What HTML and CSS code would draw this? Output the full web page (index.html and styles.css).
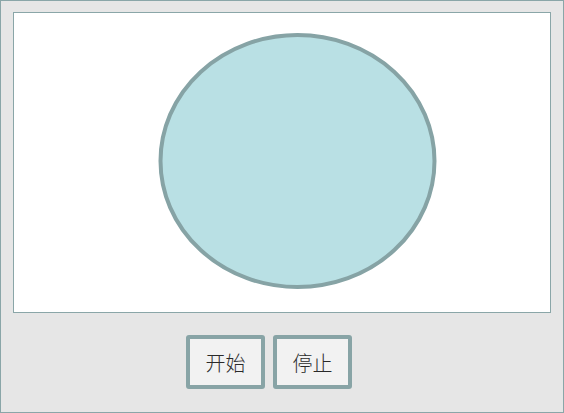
FILE: index.html
```html
<!DOCTYPE html>
<html>
<head>
<meta charset="utf-8">
<link rel="stylesheet" href="styles.css">
</head>
<body>
<div class="window">
  <div class="canvas">
    <svg width="536" height="299" viewBox="0 0 536 299">
      <ellipse cx="283.5" cy="148" rx="137" ry="126" fill="#b9e0e4" stroke="#86a3a5" stroke-width="4"/>
    </svg>
  </div>
  <div class="controls">
    <button class="btn">开始</button>
    <button class="btn">停止</button>
  </div>
</div>
</body>
</html>
```
FILE: styles.css
```css
html, body {
  margin: 0;
  padding: 0;
}
.window {
  width: 564px;
  height: 413px;
  box-sizing: border-box;
  border: 1px solid #8aa6a8;
  background: #e6e6e6;
  padding: 11px 0 0 12px;
  font-family: "Noto Sans CJK SC", sans-serif;
}
.canvas {
  width: 538px;
  height: 301px;
  box-sizing: border-box;
  border: 1px solid #8aa6a8;
  background: #ffffff;
}
.canvas svg {
  display: block;
}
.controls {
  display: flex;
  gap: 8px;
  margin-top: 22px;
  padding-left: 173px;
}
.btn {
  width: 79px;
  height: 54px;
  box-sizing: border-box;
  border: 4px solid #88a4a6;
  border-radius: 3px;
  background: #f2f2f2;
  color: #2a2a2a;
  font-family: "Noto Sans CJK SC", sans-serif;
  font-size: 20px;
  font-weight: 300;
  padding: 0;
  margin: 0;
}
```
